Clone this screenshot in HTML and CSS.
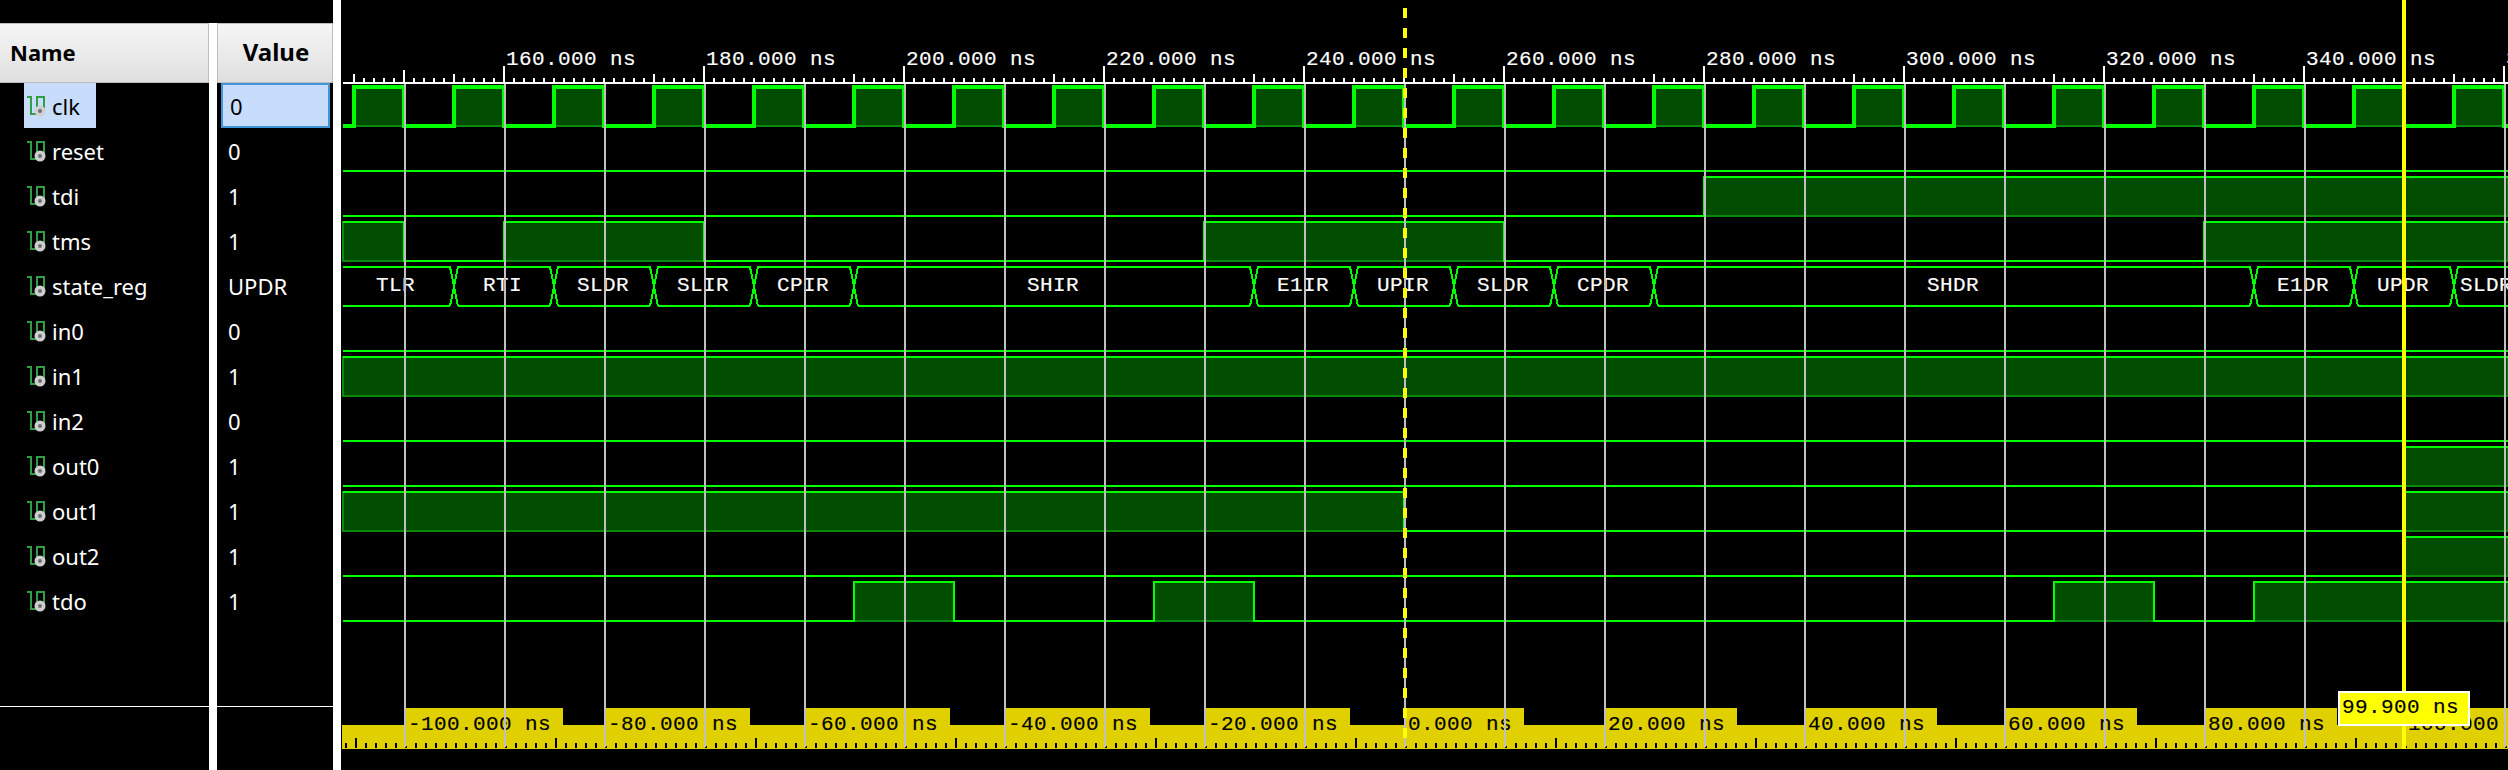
FILE: index.html

```html
<!DOCTYPE html>
<html>
<head>
  <meta charset="utf-8">
  <title>Waveform</title>
  <link rel="stylesheet" href="styles.css">
</head>
<body>
  <svg class="defs">
    <symbol id="sigIcon" viewBox="0 0 20 22">
      <path d="M1 2H5V19H11V2H18V15" fill="none" stroke="#2f9e44" stroke-width="2"/>
      <circle cx="14" cy="16" r="5.5" fill="#cfcfcf"/>
      <circle cx="14" cy="16" r="2" fill="#707070"/>
    </symbol>
  </svg>

  <div class="app">
    <div class="col col-name">
      <div class="head">Name</div>
      <div class="rows">
        <div class="row"><span class="sig selected"><svg class="icon"><use href="#sigIcon"/></svg>clk</span></div>
        <div class="row"><span class="sig"><svg class="icon"><use href="#sigIcon"/></svg>reset</span></div>
        <div class="row"><span class="sig"><svg class="icon"><use href="#sigIcon"/></svg>tdi</span></div>
        <div class="row"><span class="sig"><svg class="icon"><use href="#sigIcon"/></svg>tms</span></div>
        <div class="row"><span class="sig"><svg class="icon"><use href="#sigIcon"/></svg>state_reg</span></div>
        <div class="row"><span class="sig"><svg class="icon"><use href="#sigIcon"/></svg>in0</span></div>
        <div class="row"><span class="sig"><svg class="icon"><use href="#sigIcon"/></svg>in1</span></div>
        <div class="row"><span class="sig"><svg class="icon"><use href="#sigIcon"/></svg>in2</span></div>
        <div class="row"><span class="sig"><svg class="icon"><use href="#sigIcon"/></svg>out0</span></div>
        <div class="row"><span class="sig"><svg class="icon"><use href="#sigIcon"/></svg>out1</span></div>
        <div class="row"><span class="sig"><svg class="icon"><use href="#sigIcon"/></svg>out2</span></div>
        <div class="row"><span class="sig"><svg class="icon"><use href="#sigIcon"/></svg>tdo</span></div>
      </div>
      <div class="foot"></div>
    </div>
    <div class="split split-short"></div>
    <div class="col col-value">
      <div class="head head-value">Value</div>
      <div class="rows">
        <div class="row val val-selected">0</div>
        <div class="row val">0</div>
        <div class="row val">1</div>
        <div class="row val">1</div>
        <div class="row val">UPDR</div>
        <div class="row val">0</div>
        <div class="row val">1</div>
        <div class="row val">0</div>
        <div class="row val">1</div>
        <div class="row val">1</div>
        <div class="row val">1</div>
        <div class="row val">1</div>
      </div>
      <div class="foot"></div>
    </div>
    <div class="split"></div>
    <div class="wave" id="wave"></div>
  </div>

  <script src="waveform.js"></script>
</body>
</html>
```

FILE: styles.css

```css
html, body {
  height: 100%;
  margin: 0;
}
body {
  background-color: #000;
  overflow: hidden;
  font-family: "Noto Sans", sans-serif;
}
.defs {
  display: none;
}
.app {
  display: flex;
  height: 770px;
}
.col {
  display: flex;
  flex-direction: column;
  padding-top: 23px;
  box-sizing: border-box;
}
.col-name {
  width: 209px;
}
.col-value {
  width: 116px;
}
.split {
  width: 8px;
  background-color: #fff;
}
.split-short {
  margin-top: 23px;
}
.head {
  height: 60px;
  box-sizing: border-box;
  padding-left: 10px;
  border: 1px solid #bdbdbd;
  border-left: 0;
  background: linear-gradient(#f6f6f6, #dfdfdf);
  font-size: 22px;
  font-weight: bold;
  line-height: 56px;
  color: #000;
}
.head-value {
  padding-left: 2px;
  border-left: 1px solid #bdbdbd;
  text-align: center;
  font-size: 24px;
}
.row {
  display: flex;
  height: 45px;
  align-items: center;
  font-size: 22px;
  line-height: 44px;
  color: #fff;
}
.sig {
  display: flex;
  height: 45px;
  align-items: center;
  margin-left: 24px;
  padding: 0 16px 0 2px;
}
.selected {
  background-color: #c8ddfb;
  color: #000;
}
.icon {
  width: 20px;
  height: 22px;
  margin-right: 6px;
}
.val {
  padding-left: 11px;
}
.val-selected {
  box-sizing: border-box;
  margin: 0 3px 0 4px;
  padding-left: 7px;
  border: 2px solid #3f95d6;
  background-color: #c8ddfb;
  color: #000;
}
.foot {
  margin-top: 83px;
  flex: 1;
  border-top: 1px solid #fff;
}
.wave {
  flex: 1;
  height: 770px;
}
.wave svg {
  display: block;
  shape-rendering: crispEdges;
}
.level {
  fill: none;
  stroke: #00ff00;
  stroke-width: 2;
}
.level-thick {
  stroke-width: 4;
}
.high {
  fill: #004d00;
  stroke: #0a8a0a;
  stroke-width: 2;
}
.bus {
  fill: none;
  stroke: #00ff00;
  stroke-width: 2;
}
.grid {
  fill: #c0c0c0;
}
.tick {
  fill: #fff;
}
.tick-dark {
  fill: #000;
}
.band {
  fill: #e0d000;
}
.txt {
  font-family: "Liberation Mono", monospace;
  font-size: 21px;
  letter-spacing: 0.4px;
  fill: #fff;
  stroke: #fff;
  stroke-width: 0.15px;
}
.txt-dark {
  fill: #000;
  stroke: #000;
}
.marker {
  stroke: #ffff00;
  stroke-width: 4;
  stroke-dasharray: 10 10;
}
.cursor {
  fill: #ffff00;
}
.cursor-tip {
  fill: #ffff00;
  stroke: #fff;
  stroke-width: 2;
}
```

FILE: waveform.js

```js
// Draws the wave canvas. All x/y values are page pixels, 10px = 1ns.
var END = 2508;
var out = [];

function rect(cls, x, y, w, h) {
  out.push('<rect class="' + cls + '" x="' + x + '" y="' + y + '" width="' + w + '" height="' + h + '"/>');
}
function text(cls, x, y, s) {
  out.push('<text class="' + cls + '" x="' + x + '" y="' + y + '">' + s + '</text>');
}
function rowHigh(i) { return 87 + 45 * i; }
function rowLow(i) { return 126 + 45 * i; }

// one bit signal, highs is a list of [from, to]
function bit(i, highs, thick) {
  var hi = rowHigh(i), lo = rowLow(i);
  var x = 343, d = '';
  highs.forEach(function(h) {
    rect('high', h[0], hi, h[1] - h[0], lo - hi);
  });
  if (highs.length && highs[0][0] <= x) {
    d = 'M' + highs[0][0] + ' ' + hi;
  } else {
    d = 'M' + x + ' ' + lo;
  }
  highs.forEach(function(h) {
    if (h[0] > x) {
      d += 'H' + h[0] + 'V' + hi;
    }
    d += 'H' + h[1];
    if (h[1] < END) {
      d += 'V' + lo;
    }
    x = h[1];
  });
  if (x < END) {
    d += 'H' + END;
  }
  out.push('<path class="level' + (thick ? ' level-thick' : '') + '" d="' + d + '"/>');
}

// state_reg bus
function bus(i, edges, labels) {
  var hi = rowHigh(i), lo = rowLow(i);
  var d = 'M343 ' + hi;
  edges.forEach(function(e) {
    d += 'H' + (e - 4) + 'L' + (e + 4) + ' ' + lo + 'M' + (e - 4) + ' ' + lo + 'L' + (e + 4) + ' ' + hi;
  });
  d += 'H' + END + 'M343 ' + lo;
  edges.forEach(function(e) {
    d += 'H' + (e - 4) + 'M' + (e + 4) + ' ' + lo;
  });
  d += 'H' + END;
  out.push('<path class="bus" d="' + d + '"/>');
  labels.forEach(function(l) {
    text('txt', l[0], 291, l[1]);
  });
}

// top ruler
var x, n;
for (n = 160; n <= 360; n += 20) {
  text('txt', 506 + (n - 160) * 10, 65, n + '.000 ns');
}
rect('tick', 343, 82, END - 343, 2);
for (x = 353; x < END; x += 10) {
  var tickTop = 78;
  if (x == 353 || (x - 453) % 200 == 0) tickTop = 74;
  if (x == 403) tickTop = 70;
  if ((x - 503) % 200 == 0) tickTop = 66;
  rect('tick', x, tickTop, 2, 83 - tickTop);
}

// signals
var clk = [];
for (x = 354; x < END; x += 100) clk.push([x, x + 50]);
bit(0, clk, true);
bit(1, []);
bit(2, [[1704, END]]);
bit(3, [[343, 404], [504, 704], [1204, 1504], [2204, END]]);
bus(4, [454, 554, 654, 754, 854, 1254, 1354, 1454, 1554, 1654, 2254, 2354, 2454], [
  [376, 'TLR'], [483, 'RTI'], [577, 'SLDR'], [677, 'SLIR'], [777, 'CPIR'],
  [1027, 'SHIR'], [1277, 'E1IR'], [1377, 'UPIR'], [1477, 'SLDR'], [1577, 'CPDR'],
  [1927, 'SHDR'], [2277, 'E1DR'], [2377, 'UPDR'], [2460, 'SLDR']
]);
bit(5, []);
bit(6, [[343, END]]);
bit(7, []);
bit(8, [[2404, END]]);
bit(9, [[343, 1404], [2404, END]]);
bit(10, [[2404, END]]);
bit(11, [[854, 954], [1154, 1254], [2054, 2154], [2254, END]]);

// bottom ruler
rect('band', 342, 725, END - 342, 24);
for (n = -100; n <= 100; n += 20) {
  var label = n + '.000 ns';
  var tabLeft = 406 + (n + 100) * 10;
  rect('band', tabLeft, 708, label.length * 13 + 14, 17);
  text('txt txt-dark', tabLeft + 2, 730, label);
}
for (x = 345; x < END; x += 10) {
  var tickLen = (x - 355) % 200 == 0 ? 10 : 5;
  if ((x - 305) % 100 == 0) tickLen = 2;
  rect('tick-dark', x, 748 - tickLen, 2, tickLen);
}

// grid lines go over everything except the markers
for (x = 404; x < END; x += 100) {
  rect('grid', x, 84, 2, 663);
}
out.push('<line class="marker" x1="1405" y1="8" x2="1405" y2="739"/>');
rect('cursor', 2402, 0, 4, 749);
rect('cursor-tip', 2339, 692, 130, 33);
text('txt txt-dark', 2342, 713, '99.900 ns');

document.getElementById('wave').innerHTML =
  '<svg width="2167" height="770" viewBox="341 0 2167 770">' + out.join('') + '</svg>';
```
